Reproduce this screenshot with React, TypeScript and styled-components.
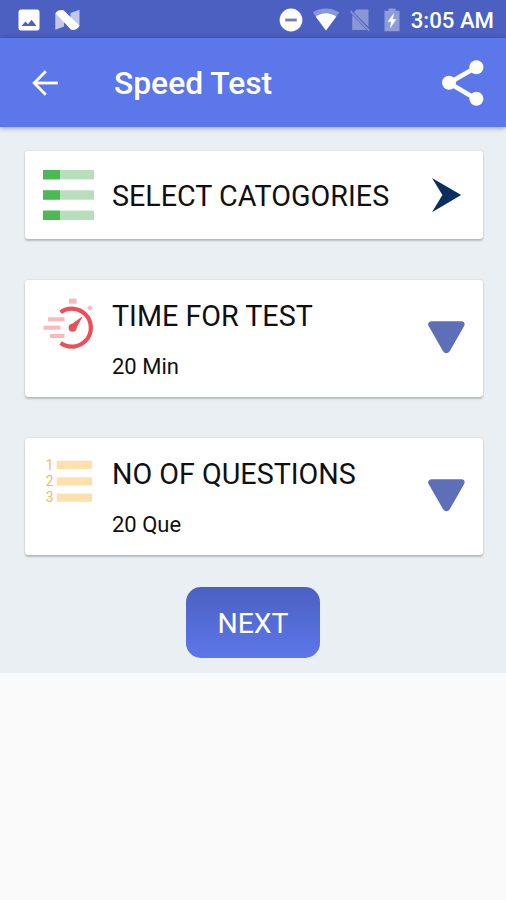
import React from "react";
import styled, { createGlobalStyle } from "styled-components";

const colors = {
  primary: "#5c77e9",
  primaryDark: "#4b60c0",
  background: "#e9eff2",
  window: "#fafafa",
  triangle: "#5d70b7",
  arrow: "#0a2f5f",
};

const GlobalStyle = createGlobalStyle`
  * {
    box-sizing: border-box;
  }

  body {
    margin: 0;
    background-color: ${colors.window};
    font-family: Roboto, "Noto Sans", sans-serif;
  }

  svg {
    display: block;
    flex-shrink: 0;
  }
`;

const Container = styled.div`
  width: 100%;
  min-height: 900px;
  background-color: ${colors.window};
`;

const StatusBar = styled.div`
  display: flex;
  align-items: center;
  justify-content: space-between;
  height: 38px;
  padding: 1px 12px 0 18px;
  background-color: ${colors.primaryDark};
`;

const StatusGroup = styled.div<{ $gap: number }>`
  display: flex;
  align-items: center;
  gap: ${({ $gap }) => $gap}px;
`;

const Clock = styled.span`
  margin-left: -3px;
  color: #fff;
  font-size: 22.2px;
  font-weight: 500;
  line-height: 26px;
`;

const AppBar = styled.header`
  position: relative;
  display: flex;
  align-items: center;
  height: 89px;
  padding: 0 21px 0 31px;
  background-color: ${colors.primary};
  box-shadow: 0 1px 5px rgba(0, 0, 0, 0.36);
`;

const AppTitle = styled.h1`
  flex-grow: 1;
  margin: 0 0 0 55px;
  color: #fff;
  font-size: 31.8px;
  font-weight: 500;
  line-height: 38px;
`;

const IconButton = styled.button`
  padding: 0;
  border: none;
  background: none;
  color: #fff;
`;

const Content = styled.main`
  display: flex;
  flex-direction: column;
  height: 546px;
  padding: 24px 23px 0 25px;
  background-color: ${colors.background};
`;

const Card = styled.section<{ $height: number }>`
  display: flex;
  height: ${({ $height }) => $height}px;
  margin-bottom: 41px;
  padding: 17px 18px 0 17px;
  border-radius: 3px;
  background-color: #fff;
  box-shadow: 0 2px 2px rgba(0, 0, 0, 0.2), 0 0 2px rgba(0, 0, 0, 0.16);

  &:last-of-type {
    margin-bottom: 32px;
  }
`;

const CardBody = styled.div<{ $top: number }>`
  flex-grow: 1;
  margin-left: 16px;
  padding-top: ${({ $top }) => $top}px;
`;

const CardTitle = styled.h2`
  margin: 0;
  color: #101010;
  font-size: 28.7px;
  font-weight: 400;
  line-height: 34px;
  white-space: nowrap;
`;

const CardValue = styled.p`
  margin: 21px 0 0;
  color: #101010;
  font-size: 22px;
  line-height: 26px;
`;

const CardAction = styled.div<{ $top: number }>`
  padding-top: ${({ $top }) => $top}px;
`;

const NextButton = styled.button`
  align-self: center;
  width: 134px;
  height: 71px;
  margin-right: 2px;
  padding: 3px 0 0;
  border: none;
  border-radius: 15px;
  background: linear-gradient(#4b60c2, #5c77e9);
  color: #fff;
  font-family: inherit;
  font-size: 28.4px;
  line-height: 34px;
`;

const PictureIcon = () => (
  <svg width="22" height="22" viewBox="0 0 22 22">
    <rect x="0.5" y="0.5" width="21" height="21" rx="2.5" fill="#fff" />
    <path d="M3.5 17 7.5 12.5 10 15.2 13.6 10.8 18.5 17z" fill={colors.primaryDark} />
  </svg>
);

const NougatIcon = () => (
  <svg width="26" height="22" viewBox="0 0 26 22">
    <path d="M0.3 4.5 4 1.5 9 6V17.5L0.3 20.8z" fill="#fff" opacity="0.65" />
    <path d="M24.5 0.8V17L21 20.5 15.5 15V4z" fill="#fff" opacity="0.65" />
    <path d="M0.5 4.3C2 1.6 5 0.8 8.6 1.2L24.3 16.5C23 19.8 20 21.5 16 20.8z" fill="#fff" />
  </svg>
);

const DoNotDisturbIcon = () => (
  <svg width="24" height="24" viewBox="0 0 24 24">
    <circle cx="12" cy="12" r="11.4" fill="#fff" />
    <path d="M6.2 12H17.8" stroke="#6c7bc9" strokeWidth="2.8" />
  </svg>
);

const WifiIcon = () => (
  <svg width="28" height="24" viewBox="0 0 28 24">
    <path d="M0.8 4.6C8 -0.8 20 -0.8 27.2 4.6L14 22.5z" fill="#fff" opacity="0.35" />
    <path d="M3.8 8.8C9.5 4 18.5 4 24.2 8.8L14 22.5z" fill="#fff" />
  </svg>
);

const NoSimIcon = () => (
  <svg width="20" height="24" viewBox="0 0 20 24">
    <path d="M6.5 1.5H18.5V19L4 4.5zM2.2 7 16.8 22H2.2z" fill="#fff" opacity="0.35" />
    <path d="M0.6 3.2 19.2 22.6" stroke="#fff" strokeWidth="2" opacity="0.3" />
  </svg>
);

const BatteryIcon = () => (
  <svg width="16" height="24" viewBox="0 0 16 24">
    <path d="M4.5 0.5H11.5V2.7H15.5V23.3H0.5V2.7H4.5z" fill="#fff" opacity="0.38" />
    <path d="M10 5 3.6 13.8H7L6 20.6 12.3 11.2H8.9z" fill="#fff" />
  </svg>
);

const BackIcon = () => (
  <svg width="28" height="28" viewBox="0 0 28 28" fill="none" stroke="currentColor" strokeWidth="2.8">
    <path d="M26.8 14H3.5" />
    <path d="M14.8 2.3 3.2 14 14.8 25.7" />
  </svg>
);

const ShareIcon = () => (
  <svg width="44" height="48" viewBox="0 0 44 48" fill="currentColor">
    <path d="M35.2 8.2 8 24 35.2 40" fill="none" stroke="currentColor" strokeWidth="4.6" />
    <circle cx="8" cy="23.8" r="7" />
    <circle cx="35.4" cy="8.2" r="7" />
    <circle cx="35.4" cy="39.8" r="7" />
  </svg>
);

const CategoriesIcon = () => (
  <svg width="54" height="54" viewBox="0 0 54 54">
    {[2, 22.3, 42.6].map((y) => (
      <React.Fragment key={y}>
        <rect x="1" y={y} width="51" height="9.4" fill="#b8dfbc" />
        <rect x="1" y={y} width="17" height="9.4" fill="#4db955" />
      </React.Fragment>
    ))}
  </svg>
);

const TimerIcon = () => (
  <svg width="54" height="54" viewBox="0 0 54 54">
    <g fill="#f9b9be">
      <rect x="6" y="20.3" width="16.5" height="4" />
      <rect x="1.5" y="28.7" width="17" height="4" />
      <rect x="8" y="37" width="14.5" height="4" />
      <rect x="27" y="1.5" width="7.6" height="5.2" />
      <path d="M48 8 50.8 10.9 48 13.8 45.2 10.9z" />
    </g>
    <path
      d="M18.6 15.4A19 19 0 1 1 18.6 46"
      fill="none"
      stroke="#ea5059"
      strokeWidth="4.2"
    />
    <circle cx="30.6" cy="30.8" r="4" fill="#ea5059" />
    <path d="M28.7 28.5 39.8 20.2 33.2 32.2z" fill="#ea5059" stroke="#ea5059" strokeLinejoin="round" />
  </svg>
);

const ListNumber = styled.text`
  fill: #fbb950;
  font-family: Roboto, sans-serif;
  font-size: 13.8px;
  text-anchor: middle;
`;

const QuestionsIcon = () => (
  <svg width="54" height="54" viewBox="0 0 54 54">
    {[5.8, 22.2, 38.6].map((y, index) => (
      <React.Fragment key={y}>
        <ListNumber x="7.6" y={y + 8.8}>
          {index + 1}
        </ListNumber>
        <rect x="14.6" y={y} width="35.6" height="8.2" rx="0.8" fill="#fee0af" />
      </React.Fragment>
    ))}
  </svg>
);

const ArrowIcon = () => (
  <svg width="38" height="36" viewBox="0 0 38 36">
    <path d="M5 1 34.2 18 5 35.2 15.4 18z" fill={colors.arrow} />
  </svg>
);

const TriangleIcon = () => (
  <svg width="38" height="36" viewBox="0 0 38 36">
    <path
      d="M4.4 4.5H34.4L20.1 29.5Q19.4 30.5 18.7 29.5z"
      fill={colors.triangle}
      stroke={colors.triangle}
      strokeWidth="6.4"
      strokeLinejoin="round"
    />
  </svg>
);

const App = () => {
  return (
    <Container>
      <GlobalStyle />
      <StatusBar>
        <StatusGroup $gap={15}>
          <PictureIcon />
          <NougatIcon />
        </StatusGroup>
        <StatusGroup $gap={14}>
          <StatusGroup $gap={9.5}>
            <DoNotDisturbIcon />
            <WifiIcon />
            <NoSimIcon />
          </StatusGroup>
          <BatteryIcon />
          <Clock>3:05 AM</Clock>
        </StatusGroup>
      </StatusBar>
      <AppBar>
        <IconButton aria-label="Back">
          <BackIcon />
        </IconButton>
        <AppTitle>Speed Test</AppTitle>
        <IconButton aria-label="Share">
          <ShareIcon />
        </IconButton>
      </AppBar>
      <Content>
        <Card $height={88}>
          <CategoriesIcon />
          <CardBody $top={11}>
            <CardTitle>SELECT CATOGORIES</CardTitle>
          </CardBody>
          <CardAction $top={9}>
            <ArrowIcon />
          </CardAction>
        </Card>
        <Card $height={117}>
          <TimerIcon />
          <CardBody $top={2}>
            <CardTitle>TIME FOR TEST</CardTitle>
            <CardValue>20 Min</CardValue>
          </CardBody>
          <CardAction $top={23}>
            <TriangleIcon />
          </CardAction>
        </Card>
        <Card $height={117}>
          <QuestionsIcon />
          <CardBody $top={2}>
            <CardTitle>NO OF QUESTIONS</CardTitle>
            <CardValue>20 Que</CardValue>
          </CardBody>
          <CardAction $top={23}>
            <TriangleIcon />
          </CardAction>
        </Card>
        <NextButton>NEXT</NextButton>
      </Content>
    </Container>
  );
};

export default App;
